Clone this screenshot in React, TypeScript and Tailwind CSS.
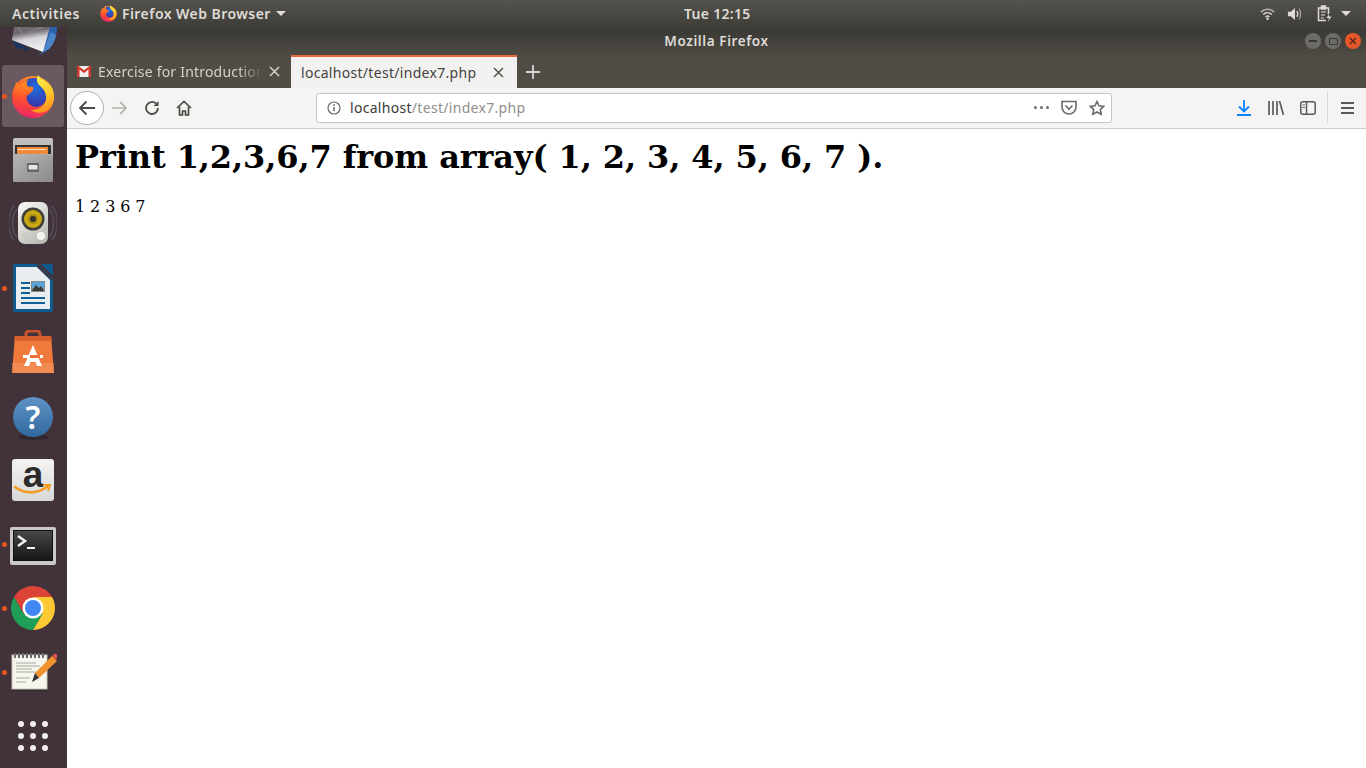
import React from "react";

const FirefoxIcon = ({ size, id }: { size: number; id: string }) => (
  <svg width={size} height={size} viewBox="0 0 44 45">
    <defs>
      <linearGradient id={`${id}Body`} x1="0.75" y1="0.05" x2="0.25" y2="0.95">
        <stop offset="0" stopColor="#ff9a24" />
        <stop offset="0.5" stopColor="#ff5630" />
        <stop offset="1" stopColor="#ea1f6c" />
      </linearGradient>
      <linearGradient id={`${id}Fox`} x1="0.5" y1="0" x2="0.3" y2="1">
        <stop offset="0" stopColor="#ff9a1e" />
        <stop offset="0.55" stopColor="#ff4f2e" />
        <stop offset="1" stopColor="#ee2a60" />
      </linearGradient>
      <linearGradient id={`${id}Flame`} x1="0.4" y1="0" x2="0.6" y2="1">
        <stop offset="0" stopColor="#fff04a" />
        <stop offset="0.55" stopColor="#ffc62a" />
        <stop offset="1" stopColor="#ff8c1c" />
      </linearGradient>
      <radialGradient id={`${id}Blue`} cx="0.55" cy="0.35" r="0.7">
        <stop offset="0" stopColor="#1f6fe0" />
        <stop offset="1" stopColor="#3b2fa0" />
      </radialGradient>
    </defs>
    <circle cx="22" cy="23.500" r="21.500" fill={`url(#${id}Body)`} />
    <circle cx="23" cy="19" r="15" fill={`url(#${id}Blue)`} />
    <path d="M1 19L5 8c1 2 2 3 4 4 2-3 5-5 8-6-2 3-2 5 0 7l5 0c1 3-1 5-3 7l-3 2c-2 4 1 9 6 11 4 2 9 1 12-3v10L10 42 2 32z" fill={`url(#${id}Fox)`} />
    <path d="M27 1c-2 5-1 9 3 12 5 4 7 11 4 17-3 5-8 7-14 7 8 5 18 3 22-6 4-9 0-20-7-23l-3-3c0 1-1 1-1 1-1-2-3-4-4-5z" fill={`url(#${id}Flame)`} />
  </svg>
);

const DockSlot = ({
  children,
  running = false,
  active = false,
}: {
  children?: React.ReactNode;
  running?: boolean;
  active?: boolean;
}) => (
  <div className="relative flex h-16 w-full shrink-0 items-center justify-center pr-[1px]">
    {active && <div className="absolute top-[1px] left-[2px] h-[62px] w-[62px] rounded-[3px] bg-[#6a5a60]" />}
    {running && <div className="absolute top-[30px] left-[2px] z-10 h-[5px] w-[5px] rounded-full bg-[#e9541f]" />}
    <div className="relative flex items-center justify-center">{children}</div>
  </div>
);

const Dock = () => (
  <div className="flex h-[741px] w-[67px] shrink-0 flex-col overflow-hidden bg-[#42323a]">
    <div className="-mt-[27px] flex flex-col">
      <DockSlot>
        <svg width="48" height="48" viewBox="0 0 48 48">
          <defs>
            <linearGradient id="tbEnv" x1="0.4" y1="0.2" x2="0.6" y2="1">
              <stop offset="0" stopColor="#6f6a72" />
              <stop offset="0.35" stopColor="#d8d6da" />
              <stop offset="1" stopColor="#f4f4f6" />
            </linearGradient>
          </defs>
          <path d="M40 19h8c0 14-7 26-20 28l6-3z" fill="#2c62ad" />
          <path d="M42 24l-8 20 6-3c3-3 6-8 7-14z" fill="#4b84c9" />
          <path d="M4 32c1 5 4 10 8 9l2-1 4 4 2-3z" fill="#1c3560" />
          <path d="M5 19L3 32l31 12 7-25z" fill="url(#tbEnv)" />
          <path d="M9 19l5 8 20-8" fill="none" stroke="#8c8890" strokeWidth="1" />
        </svg>
      </DockSlot>
      <DockSlot running active>
        <FirefoxIcon size={44} id="dockFf" />
      </DockSlot>
      <DockSlot>
        <svg width="40" height="44" viewBox="0 0 40 44">
          <defs>
            <linearGradient id="fmTop" x1="0" y1="0" x2="0" y2="1">
              <stop offset="0" stopColor="#c4c4c4" />
              <stop offset="1" stopColor="#8c8c8c" />
            </linearGradient>
            <linearGradient id="fmFront" x1="0" y1="0" x2="1" y2="1">
              <stop offset="0" stopColor="#b5b5b5" />
              <stop offset="1" stopColor="#8a8a8a" />
            </linearGradient>
          </defs>
          <rect x="0" y="0" width="40" height="44" rx="2" fill="url(#fmTop)" />
          <rect x="2" y="7" width="36" height="9" fill="#36322f" />
          <rect x="4" y="9" width="31" height="7" fill="#ee8a3c" />
          <rect x="5" y="11" width="28" height="1" fill="#fbe3c0" />
          <path d="M0 17h40v25a2 2 0 0 1-2 2H2a2 2 0 0 1-2-2z" fill="url(#fmFront)" />
          <rect x="14" y="25" width="12" height="9" rx="1" fill="#666" />
          <rect x="15.500" y="27" width="9" height="4.500" rx="1" fill="#e8e8e8" />
        </svg>
      </DockSlot>
      <DockSlot>
        <svg width="48" height="46" viewBox="0 0 48 46">
          <defs>
            <linearGradient id="rbBody" x1="0" y1="0" x2="0.6" y2="1">
              <stop offset="0" stopColor="#fbfbf8" />
              <stop offset="1" stopColor="#bdbdb8" />
            </linearGradient>
          </defs>
          <path d="M8 8C2 14 2 30 8 36M5 5C-2 13 -2 31 5 39" fill="none" stroke="#66718a" strokeWidth="1.500" opacity="0.45" />
          <path d="M40 8c6 6 6 22 0 28M43 5c7 8 7 26 0 34" fill="none" stroke="#66718a" strokeWidth="1.500" opacity="0.45" />
          <rect x="9" y="1" width="30" height="42" rx="7" fill="url(#rbBody)" />
          <circle cx="24" cy="18" r="11.500" fill="#3f3e3a" />
          <circle cx="24" cy="18" r="9" fill="#c9a814" />
          <circle cx="24" cy="18" r="5" fill="#a98b10" />
          <circle cx="24" cy="18" r="3" fill="#33322e" />
          <circle cx="32" cy="35" r="4" fill="#f4f4f2" />
          <rect x="14" y="33" width="4" height="4" rx="1" fill="none" stroke="#c4c4be" />
        </svg>
      </DockSlot>
      <DockSlot running>
        <svg width="40" height="48" viewBox="0 0 40 48">
          <path d="M2 0h24l-1 0 15 15v31a2 2 0 0 1-2 2H2a2 2 0 0 1-2-2V2a2 2 0 0 1 2-2z" fill="#0f5a8c" />
          <path d="M28 0h10a2 2 0 0 1 2 2v10z" fill="#0f5a8c" />
          <path d="M3 3h21l13 13v29H3z" fill="#e8edf0" />
          <path d="M24 0l16 16h-2L24 3z" fill="#42323a" />
          <rect x="8" y="18" width="9" height="2" fill="#125f93" />
          <rect x="8" y="23" width="9" height="2" fill="#125f93" />
          <rect x="8" y="28" width="9" height="2" fill="#125f93" />
          <rect x="8" y="33" width="24" height="2" fill="#125f93" />
          <rect x="8" y="38" width="24" height="2" fill="#125f93" />
          <rect x="18" y="17" width="14" height="11" fill="#7d8a90" />
          <rect x="19" y="18" width="12" height="6" fill="#5ea5d6" />
          <path d="M19 27l4-6 3 3 2-2 3 5z" fill="#3a3a30" />
        </svg>
      </DockSlot>
      <DockSlot>
        <svg width="42" height="44" viewBox="0 0 42 44">
          <path d="M14 10V4a3 3 0 0 1 3-3h8a3 3 0 0 1 3 3v6" fill="none" stroke="#c6532a" strokeWidth="3" />
          <path d="M3 6h36l3 37H0z" fill="#ef7a3c" />
          <rect x="0.500" y="33" width="41" height="10" fill="#f28b52" />
          <path d="M3 6h36l1 5H2z" fill="#d9622c" />
          <path d="M21 15l-9 21h5l1.500-4h5l1.500 4h5z" fill="#fff" />
          <rect x="11" y="25" width="20" height="3" fill="#fff" />
          <rect x="18" y="25" width="10" height="3" fill="#ee7435" />
        </svg>
      </DockSlot>
      <DockSlot>
        <svg className="mt-[4px]" width="42" height="44" viewBox="0 0 42 44">
          <defs>
            <linearGradient id="helpBg" x1="0" y1="0" x2="0" y2="1">
              <stop offset="0" stopColor="#5f93c4" />
              <stop offset="1" stopColor="#30689e" />
            </linearGradient>
          </defs>
          <ellipse cx="21" cy="41" rx="15" ry="3" fill="#2d2229" opacity="0.7" />
          <circle cx="21" cy="21" r="20" fill="url(#helpBg)" />
          <text x="21" y="33" textAnchor="middle" fontSize="32" fontFamily="'Noto Sans', sans-serif" fontWeight="600" fill="#ffffff">?</text>
        </svg>
      </DockSlot>
      <DockSlot>
        <svg width="42" height="42" viewBox="0 0 42 42" overflow="visible">
          <defs>
            <linearGradient id="azBg" x1="0" y1="0" x2="0" y2="1">
              <stop offset="0" stopColor="#f3f3f3" />
              <stop offset="1" stopColor="#d8d8d8" />
            </linearGradient>
          </defs>
          <rect x="0" y="0" width="42" height="42" rx="3" fill="url(#azBg)" />
          <text x="21" y="28" textAnchor="middle" fontSize="37" fontFamily="'Liberation Sans', sans-serif" fontWeight="700" fill="#2b2b2b">a</text>
          <path d="M3 28c9 7 22 7 32 0" fill="none" stroke="#f49a1c" strokeWidth="2.500" strokeLinecap="round" />
          <path d="M31 26l7 0-2 6" fill="none" stroke="#f49a1c" strokeWidth="2" />
        </svg>
      </DockSlot>
      <DockSlot running>
        <svg className="mt-[3px]" width="46" height="38" viewBox="0 0 46 38">
          <defs>
            <linearGradient id="termBg" x1="0" y1="0" x2="0" y2="1">
              <stop offset="0" stopColor="#474747" />
              <stop offset="1" stopColor="#151515" />
            </linearGradient>
          </defs>
          <rect x="0" y="0" width="46" height="38" rx="2" fill="#c8c8c8" />
          <rect x="3.500" y="3.500" width="39" height="30" fill="url(#termBg)" stroke="#111" />
          <path d="M8 9l7 5-7 5" fill="none" stroke="#f2f2f2" strokeWidth="2.500" />
          <rect x="17" y="20" width="8" height="2" fill="#f2f2f2" />
        </svg>
      </DockSlot>
      <DockSlot running>
        <svg width="44" height="44" viewBox="0 0 44 44">
          <path d="M2.950 11A22 22 0 0 1 41.050 11H22L12.470 27.500z" fill="#db4437" />
          <path d="M41.050 11A22 22 0 0 1 22 44L31.530 27.500 22 11z" fill="#fcc934" />
          <path d="M22 44A22 22 0 0 1 2.950 11L12.470 27.500H31.530z" fill="#1e9e57" />
          <circle cx="22" cy="22" r="10.500" fill="#ffffff" />
          <circle cx="22" cy="22" r="8" fill="#4285f4" />
        </svg>
      </DockSlot>
      <DockSlot running>
        <svg className="ml-[1px]" width="46" height="40" viewBox="0 0 46 40">
          <rect x="1" y="4" width="35" height="35" fill="#2a2026" opacity="0.6" />
          <rect x="1" y="3" width="35" height="34" fill="#f6f5ee" stroke="#c4c4ba" />
          <path d="M4 1v5M8 1v5M12 1v5M16 1v5M20 1v5M24 1v5M28 1v5M32 1v5" stroke="#6a6a6a" strokeWidth="2" />
          <path d="M5 11h20M5 14h24M5 17h16M5 20h20M5 26h14M5 30h10" stroke="#a8a8a0" strokeWidth="1" />
          <path d="M24 21L41 4l5 5-18 17z" fill="#f0922e" />
          <path d="M41 4l2-2a2.500 2.500 0 0 1 3 1l0 3-1 2z" fill="#d9534f" />
          <path d="M21 30l3-9 4 5z" fill="#333" />
        </svg>
      </DockSlot>
      <DockSlot>
        <div className="grid grid-cols-3 gap-x-[6px] gap-y-[6px]">
          {Array.from({ length: 9 }).map((_, i) => (
            <span key={i} className="h-[6px] w-[6px] rounded-full bg-[#f0eeee]" />
          ))}
        </div>
      </DockSlot>
    </div>
  </div>
);

const TopBar = () => (
  <div
    className="relative flex h-[27px] shrink-0 items-center justify-between bg-gradient-to-b from-[#55534d] to-[#3f3d38] text-[14px] font-semibold text-[#dfdcd7]"
    style={{ fontFamily: "'Noto Sans', sans-serif" }}
  >
    <div className="flex items-center">
      <span className="ml-3 tracking-[0.55px]">Activities</span>
      <span className="ml-5 flex">
        <FirefoxIcon size={17} id="barFf" />
      </span>
      <span className="ml-[5px] tracking-[0.45px]">Firefox Web Browser</span>
      <span className="ml-[5px] h-0 w-0 border-x-[5px] border-t-[5px] border-x-transparent border-t-[#dfdcd7]" />
    </div>
    <span className="absolute left-[684px] tracking-[0.3px]">Tue 12:15</span>
    <div className="flex items-center">
      <svg width="15" height="14" viewBox="0 0 16 14" fill="none" stroke="#dfdcd7" strokeWidth="1.600">
        <path d="M1 5c4-4 10-4 14 0" opacity="0.7" />
        <path d="M3.500 7.500c2.600-2.500 6.400-2.500 9 0" />
        <path d="M6 10c1.200-1 2.800-1 4 0" />
        <circle cx="8" cy="12" r="1.300" fill="#dfdcd7" stroke="none" />
      </svg>
      <svg className="ml-[12px]" width="15" height="14" viewBox="0 0 16 14" fill="none">
        <path d="M1 4.500h3l4.500-4v13l-4.500-4H1z" fill="#dfdcd7" />
        <path d="M10.500 4c1 1.500 1 4.500 0 6" stroke="#dfdcd7" strokeWidth="1.500" />
        <path d="M13 1.500c2 2.500 2 8.500 0 11" stroke="#dfdcd7" strokeWidth="1.200" opacity="0.7" />
      </svg>
      <svg className="ml-[15px]" width="15" height="17" viewBox="0 0 15 17" fill="none" stroke="#dfdcd7" strokeWidth="1.500">
        <path d="M9 15.500H1.500V3h10v6" />
        <path d="M4.500 1h4v3h-4z" fill="#dfdcd7" />
        <path d="M4 7h5M4 10h4M4 13h3" strokeWidth="1.200" />
        <path d="M12 9l-2.500 4H12l-1 3.500 3.500-5H12z" fill="#dfdcd7" stroke="none" />
      </svg>
      <span className="mr-[15px] ml-[9px] h-0 w-0 border-x-[5px] border-t-[5px] border-x-transparent border-t-[#dfdcd7]" />
    </div>
  </div>
);

const WindowButton = ({ className, children }: { className: string; children: React.ReactNode }) => (
  <div className={`flex h-4 w-4 items-center justify-center rounded-full ${className}`}>{children}</div>
);

const GmailIcon = () => (
  <svg width="14" height="11" viewBox="0 0 14 11">
    <rect width="14" height="11" fill="#efedea" />
    <path d="M0 0v11h2.500V3.500L7 7l4.500-3.500V11H14V0h-1.500L7 4.200 1.500 0z" fill="#d0382b" />
  </svg>
);

const TabClose = ({ color }: { color: string }) => (
  <svg width="11" height="11" viewBox="0 0 11 11" fill="none" stroke={color} strokeWidth="1.500">
    <path d="M1 1l9 9M10 1l-9 9" />
  </svg>
);

const TitleBar = () => (
  <div className="relative h-[61px] shrink-0 bg-gradient-to-b from-[#3d3b36] from-10% to-[#504d46] to-50%">
    <div className="flex h-7 items-center">
      <span className="flex-1 pt-[1px] text-center text-[13.500px] font-semibold tracking-[0.6px] text-[#dfdcd7]">Mozilla Firefox</span>
      <div className="absolute top-[6px] right-[5px] flex gap-1">
        <WindowButton className="bg-[#6d6b66]">
          <span className="h-[1.500px] w-2 bg-[#37352f]" />
        </WindowButton>
        <WindowButton className="bg-[#6d6b66]">
          <span className="h-[7px] w-[9px] rounded-[1px] border border-[#37352f]" />
        </WindowButton>
        <WindowButton className="bg-[#e5562a]">
          <svg width="8" height="8" viewBox="0 0 8 8" stroke="#4a2415" strokeWidth="1.200">
            <path d="M1 1l6 6M7 1L1 7" />
          </svg>
        </WindowButton>
      </div>
    </div>
    <div className="absolute bottom-0 left-0 flex h-[33px] w-full items-stretch">
      <div className="flex w-[224px] items-center pl-[10px] text-[14px] tracking-[0.2px] text-[#d4d2cd]">
        <GmailIcon />
        <span
          className="ml-[7px] w-[165px] overflow-hidden whitespace-nowrap"
          style={{ maskImage: "linear-gradient(to right, #000 85%, transparent)" }}
        >
          Exercise for Introduction to PHP
        </span>
        <span className="ml-[6px]">
          <TabClose color="#d4d2cd" />
        </span>
      </div>
      <div className="flex w-[226px] items-center border-t-2 border-[#e9683a] bg-[#f2f1f0] pl-[10px] text-[14px] tracking-[0.3px] text-[#45433e]">
        <span className="w-[192px]">localhost/test/index7.php</span>
        <TabClose color="#55534e" />
      </div>
      <div className="flex w-[32px] items-center justify-center">
        <svg width="14" height="14" viewBox="0 0 14 14" stroke="#d8d6d2" strokeWidth="1.800">
          <path d="M7 0v14M0 7h14" />
        </svg>
      </div>
    </div>
  </div>
);

const Toolbar = () => (
  <div className="flex h-[41px] shrink-0 items-center border-b border-[#cfcdca] bg-[#f5f4f3] pb-[1px]">
    <div className="ml-[3px] flex h-[34px] w-[34px] items-center justify-center rounded-full border border-[#b1b0ae] bg-white">
      <svg width="18" height="16" viewBox="0 0 18 16" fill="none" stroke="#4d4c49" strokeWidth="1.800">
        <path d="M17 8H2M8.500 1.500L2 8l6.500 6.500" />
      </svg>
    </div>
    <svg className="ml-[7px]" width="17" height="16" viewBox="0 0 18 16" fill="none" stroke="#b3b2b0" strokeWidth="1.800">
      <path d="M1 8h15M9.500 1.500L16 8l-6.500 6.500" />
    </svg>
    <svg className="ml-[16px]" width="16" height="16" viewBox="0 0 16 16" fill="none" stroke="#4d4c49" strokeWidth="1.800">
      <path d="M14 8a6 6 0 1 1-2-4.500" />
      <path d="M14.500 1v5h-5z" fill="#4d4c49" stroke="none" />
    </svg>
    <svg className="ml-[16px]" width="16" height="16" viewBox="0 0 16 16" fill="none" stroke="#4d4c49" strokeWidth="1.700">
      <path d="M1 8l7-6.500L15 8" />
      <path d="M3.500 6.500V15h3v-4h3v4h3V6.500" />
    </svg>
    <div className="ml-[124px] flex h-[30px] w-[796px] items-center rounded-[3px] border border-[#c8c7c5] bg-white pl-[10px]">
      <svg width="14" height="14" viewBox="0 0 14 14" fill="none" stroke="#6b6a67" strokeWidth="1.200">
        <circle cx="7" cy="7" r="6" />
        <path d="M7 6v4" strokeWidth="1.500" />
        <circle cx="7" cy="4" r="0.900" fill="#6b6a67" stroke="none" />
      </svg>
      <span className="ml-[9px] text-[14px] tracking-[0.3px] text-[#3b3a37]">
        localhost<span className="text-[#8f8e8b]">/test/index7.php</span>
      </span>
      <div className="mr-[6px] ml-auto flex items-center">
        <div className="flex gap-[2.500px]">
          <span className="h-[3.500px] w-[3.500px] rounded-full bg-[#6b6a67]" />
          <span className="h-[3.500px] w-[3.500px] rounded-full bg-[#6b6a67]" />
          <span className="h-[3.500px] w-[3.500px] rounded-full bg-[#6b6a67]" />
        </div>
        <svg className="ml-[12px]" width="16" height="15" viewBox="0 0 16 15" fill="none" stroke="#6b6a67" strokeWidth="1.600">
          <path d="M1 1.500h14v5.500a7 7 0 0 1-14 0z" />
          <path d="M4.500 5.500L8 9l3.500-3.500" />
        </svg>
        <svg className="ml-[12px]" width="16" height="16" viewBox="0 0 16 16" fill="none" stroke="#6b6a67" strokeWidth="1.600">
          <path d="M8 1.500l2 4.300 4.700.6-3.400 3.200.9 4.700L8 12l-4.200 2.300.9-4.700L1.300 6.400 6 5.800z" />
        </svg>
      </div>
    </div>
    <svg className="ml-[125px]" width="14" height="16" viewBox="0 0 14 16" fill="none" stroke="#0a84ff" strokeWidth="1.800">
      <path d="M7 0v11M2 6.500L7 11.500l5-5M0 15h14" />
    </svg>
    <svg className="ml-[17px]" width="16" height="14" viewBox="0 0 16 14" fill="none" stroke="#5a5957" strokeWidth="1.700">
      <path d="M1 0v14M5 0v14M9 0v14M11.500 0L15.500 14" />
    </svg>
    <svg className="ml-[16px]" width="16" height="14" viewBox="0 0 16 14" fill="none" stroke="#5a5957" strokeWidth="1.500">
      <rect x="0.800" y="0.800" width="14.400" height="12.400" rx="2" />
      <path d="M6.500 1v12" />
      <path d="M2.500 4h2.500M2.500 6.500h2.500" strokeWidth="1" />
    </svg>
    <div className="ml-[11px] h-[31px] w-px bg-[#d8d7d5]" />
    <svg className="ml-[13px]" width="13" height="12" viewBox="0 0 13 12" stroke="#5a5957" strokeWidth="1.800">
      <path d="M0 1h13M0 6h13M0 11h13" />
    </svg>
  </div>
);

export default function App() {
  return (
    <div className="relative flex h-screen w-[1366px] flex-col overflow-hidden bg-white">
      <TopBar />
      <div className="flex min-h-0 flex-1">
        <Dock />
        <div className="flex min-w-0 flex-1 flex-col" style={{ fontFamily: "'Noto Sans', sans-serif" }}>
          <TitleBar />
          <Toolbar />
          <div className="px-2 pt-[9px] text-black" style={{ fontFamily: "'DejaVu Serif', serif" }}>
            <h1 className="text-[32px] leading-[38px] font-bold tracking-[-0.1px]">Print 1,2,3,6,7 from array( 1, 2, 3, 4, 5, 6, 7 ).</h1>
            <p className="mt-[21px] text-[16px] leading-[19px] tracking-[-0.1px]">1 2 3 6 7</p>
          </div>
        </div>
      </div>
    </div>
  );
}
